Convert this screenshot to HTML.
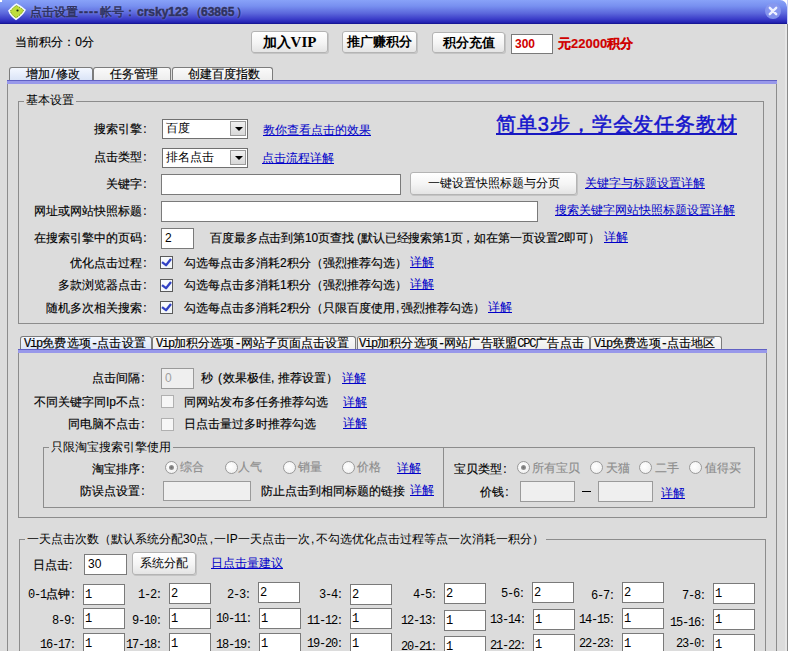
<!DOCTYPE html>
<html><head><meta charset="utf-8">
<style>
*{box-sizing:border-box}
html,body{margin:0;padding:0}
body{width:788px;height:651px;overflow:hidden;position:relative;background:#dcdcdc;font-family:"Liberation Sans",sans-serif;font-size:12px;color:#000}
.a{position:absolute;white-space:nowrap;line-height:12px;-webkit-text-stroke:0.15px currentColor}
.c{display:inline-block;width:6px;text-align:center}
.r{text-align:right}
.title{position:absolute;left:0;top:0;width:787px;height:24px;background:linear-gradient(#88a2f8 0%,#7890f0 25%,#5c68dc 55%,#3a3cc8 80%,#2424b4 93%,#10108a 100%);border-top-left-radius:3px;border-top-right-radius:7px}
.btn{position:absolute;border:1px solid #b4b4b4;border-radius:3px;background:linear-gradient(#ffffff,#f4f4f4 55%,#e4e4e4);box-shadow:1px 1px 0 #c4c4c4;text-align:center;white-space:nowrap}
.inp{position:absolute;background:#fff;border:1px solid #7a7a7a;white-space:nowrap;padding-left:3px}
.dis{background:#efefef;border-color:#9a9a9a;color:#a0a0a0}
.lnk{color:#0000c8;text-decoration:underline;-webkit-text-stroke:0 !important}
.frame{position:absolute;border:1px solid #8c8c8c}
.tab{position:absolute;border:1px solid #7c7c7c;border-bottom:none;border-radius:3px 3px 0 0;background:linear-gradient(#fafafa,#ececec)}
.tab.sel{background:linear-gradient(#f4f8ff,#d8e2f6)}
.bluel{position:absolute;height:4px;background:#9898ea;border-top:1px solid #6060c4}
.chk{position:absolute;width:13px;height:13px;background:linear-gradient(135deg,#fafcff,#f0f4f8);border:1px solid #5a5a5a}
.chk.off{background:#f6f6f6;border-color:#b0b0b0}
.rad{position:absolute;width:13px;height:13px;border-radius:50%;border:1px solid #9a9a9a;background:radial-gradient(circle at 40% 40%,#ffffff,#ececec)}
.rad.on::after{content:"";position:absolute;left:3px;top:3px;width:5px;height:5px;border-radius:50%;background:radial-gradient(#707070,#a8a8a8)}
.gray{color:#8c8c8c}
.lg{position:absolute;background:#dcdcdc;padding:0 2px;line-height:12px;white-space:nowrap}
.cmb{position:absolute;background:#fff;border:1px solid #707070;padding-left:3px;line-height:17px;white-space:nowrap}
.cmb i{position:absolute;right:1px;top:1px;width:16px;height:15px;background:linear-gradient(#f0f0f0,#d8d8d8);border:1px solid #9a9a9a}
.cmb i::after{content:"";position:absolute;left:4px;top:5px;border-left:4px solid transparent;border-right:4px solid transparent;border-top:4px solid #000}
.tt{top:6px;color:#2e3260;-webkit-text-stroke:0.5px #2e3260;text-shadow:0 0 2px #a0acf0}
.m{font-family:"Liberation Mono",monospace;font-size:12px;letter-spacing:-1.2px}
.gl{-webkit-text-stroke:0.2px #000}.gl .m{-webkit-text-stroke:0}
.gi{width:42px;height:21px;line-height:20px;font-family:"Liberation Mono",monospace;font-size:12px;padding-left:1px}
.mono{font-family:"Liberation Mono",monospace;font-size:11px}
</style></head><body>
<div style="position:absolute;left:0;top:0;width:788px;height:10px;background:#fff"></div>
<div class="title"></div>
<svg style="position:absolute;left:0;top:0" width="30" height="24" viewBox="0 0 30 24"><path d="M16.5 4.2 C19 5.5 22.5 7.5 25 10 C23 14 19.5 17 16 19.2 C12.5 17 10 14 9 10.8 C11.5 8 14 5.5 16.5 4.2 Z" fill="#bedc3c" stroke="#f4f8ff" stroke-width="1.6"/><path d="M16.5 5.6 C18.8 6.8 21.6 8.6 23.5 10.2 C21.8 13.4 19 15.8 16 17.6 C13 15.8 11 13.4 10.4 11 C12.4 8.8 14.4 6.8 16.5 5.6 Z" fill="none" stroke="#5a7a20" stroke-width="0.8" stroke-dasharray="1.2 1.6"/><circle cx="17.5" cy="10.5" r="1.1" fill="#1a2a08"/></svg>
<div class="a tt" style="left:30px">点击设置</div><div class="a tt" style="left:79px;letter-spacing:1px;font-weight:bold">----</div><div class="a tt" style="left:100px">帐号</div><div class="a tt" style="left:124px">：</div><div class="a tt" style="left:137px;font-weight:bold">crsky123</div><div class="a tt" style="left:190px">（</div><div class="a tt" style="left:201px;font-weight:bold">63865</div><div class="a tt" style="left:236px">）</div>
<svg style="position:absolute;left:764px;top:2px" width="18" height="18" viewBox="0 0 18 18"><circle cx="9" cy="9" r="8" fill="#8898ee" opacity="0.9"/><path d="M5.8 5.8 L12.2 12.2 M12.2 5.8 L5.8 12.2" stroke="#eef0ff" stroke-width="2.4" stroke-linecap="round"/></svg>
<div style="position:absolute;left:0;top:0;width:2px;height:2px;background:#fff"></div>

<!-- window right border -->
<div style="position:absolute;left:787px;top:0;width:1px;height:24px;background:#c8d0f8"></div>
<div style="position:absolute;left:785px;top:24px;width:2px;height:627px;background:#e6e6e6"></div>
<div style="position:absolute;left:787px;top:24px;width:1px;height:627px;background:#8a8a8a"></div>

<!-- top row -->
<div class="a" style="left:15px;top:36px">当前积分<span style="letter-spacing:-3px">：</span> 0分</div>
<div class="btn" style="left:251px;top:31px;width:77px;height:22px;font-weight:bold;font-size:14px;line-height:20px">加入<span style="font-family:'Liberation Serif',serif;font-size:15px">VIP</span></div>
<div class="btn" style="left:342px;top:31px;width:75px;height:22px;font-weight:bold;font-size:13px;line-height:20px">推广赚积分</div>
<div class="btn" style="left:432px;top:32px;width:73px;height:21px;font-weight:bold;font-size:13px;line-height:19px">积分充值</div>
<div class="inp" style="left:511px;top:34px;width:42px;height:20px;color:#d00000;font-weight:bold;font-size:12px;line-height:18px">300</div>
<div class="a" style="left:558px;top:37px;color:#d00000;font-weight:bold;font-size:13px;line-height:13px">元22000积分</div>

<!-- outer tabs -->
<div class="frame" style="left:7px;top:80px;width:770px;height:600px"></div>
<div class="tab sel" style="left:9px;top:67px;width:84px;height:14px"></div>
<div class="tab" style="left:93px;top:67px;width:78px;height:14px"></div>
<div class="tab" style="left:172px;top:67px;width:101px;height:14px"></div>
<div class="a" style="left:26px;top:68px">增加<span class="c">/</span>修改</div>
<div class="a" style="left:110px;top:68px">任务管理</div>
<div class="a" style="left:188px;top:68px">创建百度指数</div>
<div class="bluel" style="left:7px;top:80px;width:770px"></div>

<!-- group 基本设置 -->
<div class="frame" style="left:18px;top:101px;width:746px;height:223px"></div>
<div class="lg" style="left:24px;top:94px">基本设置</div>
<div class="a r" style="left:41px;top:123px;width:107px">搜索引擎<span class="c">:</span></div>
<div class="cmb" style="left:162px;top:119px;width:86px;height:20px">百度<i></i></div>
<div class="a lnk" style="left:263px;top:124px">教你查看点击的效果</div>
<div class="a" style="left:496px;top:114px;font-size:20px;line-height:20px;letter-spacing:0.9px;color:#1414cc;-webkit-text-stroke:0.5px #1414cc">简单3步，学会发任务教材</div><div style="position:absolute;left:496px;top:133px;width:241px;height:2px;background:#1818c0"></div>

<div class="a r" style="left:41px;top:151px;width:107px">点击类型<span class="c">:</span></div>
<div class="cmb" style="left:162px;top:148px;width:86px;height:20px">排名点击<i></i></div>
<div class="a lnk" style="left:262px;top:152px">点击流程详解</div>

<div class="a r" style="left:41px;top:178px;width:107px">关键字<span class="c">:</span></div>
<div class="inp" style="left:161px;top:174px;width:240px;height:21px"></div>
<div class="btn" style="left:410px;top:172px;width:167px;height:23px;line-height:21px">一键设置快照标题与分页</div>
<div class="a lnk" style="left:585px;top:177px">关键字与标题设置详解</div>

<div class="a r" style="left:21px;top:205px;width:127px">网址或网站快照标题<span class="c">:</span></div>
<div class="inp" style="left:161px;top:201px;width:377px;height:21px"></div>
<div class="a lnk" style="left:555px;top:204px">搜索关键字网站快照标题设置详解</div>

<div class="a r" style="left:21px;top:232px;width:127px">在搜索引擎中的页码<span class="c">:</span></div>
<div class="inp" style="left:161px;top:228px;width:33px;height:21px;line-height:19px">2</div>
<div class="a" style="left:210px;top:232px;letter-spacing:-0.12px">百度最多点击到第10页查找 (默认已经搜索第1页，如在第一页设置2即可）</div>
<div class="a lnk" style="left:604px;top:231px">详解</div>

<div class="a r" style="left:21px;top:257px;width:127px">优化点击过程<span class="c">:</span></div>
<div class="chk" style="left:160px;top:256px"><svg width="11" height="11" viewBox="0 0 11 11" style="position:absolute;left:0;top:0"><path d="M1 5.2 L5 8.2 L10 2" fill="none" stroke="#3242c4" stroke-width="2.3" stroke-linejoin="round"/></svg></div>
<div class="a" style="left:184px;top:257px">勾选每点击多消耗2积分（强烈推荐勾选）</div>
<div class="a lnk" style="left:410px;top:256px">详解</div>

<div class="a r" style="left:21px;top:279px;width:127px">多款浏览器点击<span class="c">:</span></div>
<div class="chk" style="left:160px;top:279px"><svg width="11" height="11" viewBox="0 0 11 11" style="position:absolute;left:0;top:0"><path d="M1 5.2 L5 8.2 L10 2" fill="none" stroke="#3242c4" stroke-width="2.3" stroke-linejoin="round"/></svg></div>
<div class="a" style="left:184px;top:279px">勾选每点击多消耗1积分（强烈推荐勾选）</div>
<div class="a lnk" style="left:410px;top:278px">详解</div>

<div class="a r" style="left:21px;top:302px;width:127px">随机多次相关搜索<span class="c">:</span></div>
<div class="chk" style="left:160px;top:301px"><svg width="11" height="11" viewBox="0 0 11 11" style="position:absolute;left:0;top:0"><path d="M1 5.2 L5 8.2 L10 2" fill="none" stroke="#3242c4" stroke-width="2.3" stroke-linejoin="round"/></svg></div>
<div class="a" style="left:184px;top:302px">勾选每点击多消耗2积分（只限百度使用<span class="c">,</span>强烈推荐勾选）</div>
<div class="a lnk" style="left:488px;top:301px">详解</div>

<!-- inner tabs -->
<div class="frame" style="left:18px;top:349px;width:749px;height:169px"></div>
<div class="tab sel" style="left:20px;top:336px;width:132px;height:14px"></div>
<div class="tab" style="left:152px;top:336px;width:204px;height:14px"></div>
<div class="tab" style="left:357px;top:336px;width:233px;height:14px"></div>
<div class="tab" style="left:590px;top:336px;width:132px;height:14px"></div>
<div class="a" style="left:24px;top:337px;letter-spacing:0.25px"><span class="m">Vip</span>免费选项<span class="m">-</span>点击设置</div>
<div class="a" style="left:156px;top:337px;letter-spacing:0.1px"><span class="m">Vip</span>加积分选项<span class="m">-</span>网站子页面点击设置</div>
<div class="a" style="left:359px;top:337px;letter-spacing:0.2px"><span class="m">Vip</span>加积分选项<span class="m">-</span>网站广告联盟<span class="m">CPC</span>广告点击</div>
<div class="a" style="left:594px;top:337px;letter-spacing:0.2px"><span class="m">Vip</span>免费选项<span class="m">-</span>点击地区</div>
<div class="bluel" style="left:18px;top:349px;width:749px"></div>

<div class="a r" style="left:19px;top:372px;width:127px">点击间隔<span class="c">:</span></div>
<div class="inp dis" style="left:161px;top:368px;width:33px;height:21px;line-height:19px">0</div>
<div class="a" style="left:201px;top:372px">秒</div><div class="a" style="left:218px;top:372px">(</div><div class="a" style="left:223px;top:372px">效果极佳,</div><div class="a" style="left:278px;top:372px">推荐设置）</div>
<div class="a lnk" style="left:342px;top:372px">详解</div>

<div class="a r" style="left:19px;top:396px;width:127px">不同关键字同Ip不点<span class="c">:</span></div>
<div class="chk off" style="left:161px;top:395px"></div>
<div class="a" style="left:184px;top:396px">同网站发布多任务推荐勾选</div>
<div class="a lnk" style="left:343px;top:396px">详解</div>

<div class="a r" style="left:19px;top:418px;width:127px">同电脑不点击<span class="c">:</span></div>
<div class="chk off" style="left:161px;top:418px"></div>
<div class="a" style="left:184px;top:418px">日点击量过多时推荐勾选</div>
<div class="a lnk" style="left:343px;top:417px">详解</div>

<!-- taobao group -->
<div class="frame" style="left:43px;top:447px;width:712px;height:61px"></div>
<div style="position:absolute;left:443px;top:447px;width:1px;height:60px;background:#8c8c8c"></div>
<div class="lg" style="left:49px;top:441px">只限淘宝搜索引擎使用</div>
<div class="a r" style="left:39px;top:463px;width:107px">淘宝排序<span class="c">:</span></div>
<div class="rad on" style="left:165px;top:461px"></div><div class="a gray" style="left:180px;top:461px">综合</div>
<div class="rad" style="left:225px;top:461px"></div><div class="a gray" style="left:238px;top:461px">人气</div>
<div class="rad" style="left:283px;top:461px"></div><div class="a gray" style="left:298px;top:461px">销量</div>
<div class="rad" style="left:342px;top:461px"></div><div class="a gray" style="left:357px;top:461px">价格</div>
<div class="a lnk" style="left:397px;top:462px">详解</div>
<div class="a r" style="left:39px;top:485px;width:107px">防误点设置<span class="c">:</span></div>
<div class="inp dis" style="left:163px;top:481px;width:88px;height:20px"></div>
<div class="a" style="left:261px;top:485px">防止点击到相同标题的链接</div>
<div class="a lnk" style="left:410px;top:484px">详解</div>

<div class="a" style="left:454px;top:463px">宝贝类型<span class="c">:</span></div>
<div class="rad on" style="left:517px;top:461px"></div><div class="a gray" style="left:532px;top:462px">所有宝贝</div>
<div class="rad" style="left:590px;top:461px"></div><div class="a gray" style="left:606px;top:462px">天猫</div>
<div class="rad" style="left:639px;top:461px"></div><div class="a gray" style="left:655px;top:462px">二手</div>
<div class="rad" style="left:689px;top:461px"></div><div class="a gray" style="left:705px;top:462px">值得买</div>
<div class="a" style="left:480px;top:486px">价钱<span class="c">:</span></div>
<div class="inp dis" style="left:520px;top:481px;width:55px;height:21px"></div>
<div style="position:absolute;left:582px;top:491px;width:9px;height:1px;background:#000"></div>
<div class="inp dis" style="left:598px;top:481px;width:55px;height:21px"></div>
<div class="a lnk" style="left:661px;top:487px">详解</div>

<!-- 一天点击次数 group -->
<div class="frame" style="left:19px;top:539px;width:747px;height:200px"></div>
<div class="lg" style="left:25px;top:533px">一天点击次数（默认系统分配30点<span class="c">,</span>一IP一天点击一次<span class="c">,</span>不勾选优化点击过程等点一次消耗一积分）</div>
<div class="a" style="left:33px;top:559px">日点击:</div>
<div class="inp" style="left:84px;top:554px;width:43px;height:21px;line-height:19px">30</div>
<div class="btn" style="left:132px;top:552px;width:64px;height:23px;line-height:21px">系统分配</div>
<div class="a lnk" style="left:211px;top:557px">日点击量建议</div>
<!-- GRID -->
<div class="a r gl" style="left:-4px;top:588px;width:80px"><span class="m">0-1</span>点钟<span class="c">:</span></div>
<div class="inp gi" style="left:83px;top:584px">1</div>
<div class="a r gl" style="left:82px;top:588px;width:80px"><span class="m">1-2</span><span class="c">:</span></div>
<div class="inp gi" style="left:169px;top:583px">2</div>
<div class="a r gl" style="left:171px;top:588px;width:80px"><span class="m">2-3</span><span class="c">:</span></div>
<div class="inp gi" style="left:258px;top:582px">2</div>
<div class="a r gl" style="left:263px;top:588px;width:80px"><span class="m">3-4</span><span class="c">:</span></div>
<div class="inp gi" style="left:350px;top:584px">2</div>
<div class="a r gl" style="left:357px;top:588px;width:80px"><span class="m">4-5</span><span class="c">:</span></div>
<div class="inp gi" style="left:444px;top:583px">2</div>
<div class="a r gl" style="left:445px;top:587px;width:80px"><span class="m">5-6</span><span class="c">:</span></div>
<div class="inp gi" style="left:532px;top:582px">2</div>
<div class="a r gl" style="left:535px;top:589px;width:80px"><span class="m">6-7</span><span class="c">:</span></div>
<div class="inp gi" style="left:622px;top:582px">2</div>
<div class="a r gl" style="left:626px;top:589px;width:80px"><span class="m">7-8</span><span class="c">:</span></div>
<div class="inp gi" style="left:713px;top:583px">1</div>
<div class="a r gl" style="left:-4px;top:614px;width:80px"><span class="m">8-9</span><span class="c">:</span></div>
<div class="inp gi" style="left:83px;top:608px">1</div>
<div class="a r gl" style="left:82px;top:614px;width:80px"><span class="m">9-10</span><span class="c">:</span></div>
<div class="inp gi" style="left:169px;top:608px">1</div>
<div class="a r gl" style="left:172px;top:612px;width:80px"><span class="m">10-11</span><span class="c">:</span></div>
<div class="inp gi" style="left:259px;top:608px">1</div>
<div class="a r gl" style="left:263px;top:614px;width:80px"><span class="m">11-12</span><span class="c">:</span></div>
<div class="inp gi" style="left:350px;top:608px">1</div>
<div class="a r gl" style="left:357px;top:614px;width:80px"><span class="m">12-13</span><span class="c">:</span></div>
<div class="inp gi" style="left:444px;top:610px">1</div>
<div class="a r gl" style="left:446px;top:613px;width:80px"><span class="m">13-14</span><span class="c">:</span></div>
<div class="inp gi" style="left:533px;top:609px">1</div>
<div class="a r gl" style="left:535px;top:613px;width:80px"><span class="m">14-15</span><span class="c">:</span></div>
<div class="inp gi" style="left:622px;top:608px">1</div>
<div class="a r gl" style="left:626px;top:616px;width:80px"><span class="m">15-16</span><span class="c">:</span></div>
<div class="inp gi" style="left:713px;top:609px">1</div>
<div class="a r gl" style="left:-4px;top:638px;width:80px"><span class="m">16-17</span><span class="c">:</span></div>
<div class="inp gi" style="left:83px;top:633px">1</div>
<div class="a r gl" style="left:82px;top:638px;width:80px"><span class="m">17-18</span><span class="c">:</span></div>
<div class="inp gi" style="left:169px;top:633px">1</div>
<div class="a r gl" style="left:172px;top:638px;width:80px"><span class="m">18-19</span><span class="c">:</span></div>
<div class="inp gi" style="left:259px;top:633px">1</div>
<div class="a r gl" style="left:263px;top:637px;width:80px"><span class="m">19-20</span><span class="c">:</span></div>
<div class="inp gi" style="left:350px;top:633px">1</div>
<div class="a r gl" style="left:357px;top:640px;width:80px"><span class="m">20-21</span><span class="c">:</span></div>
<div class="inp gi" style="left:444px;top:636px">1</div>
<div class="a r gl" style="left:446px;top:639px;width:80px"><span class="m">21-22</span><span class="c">:</span></div>
<div class="inp gi" style="left:533px;top:634px">1</div>
<div class="a r gl" style="left:535px;top:637px;width:80px"><span class="m">22-23</span><span class="c">:</span></div>
<div class="inp gi" style="left:622px;top:633px">1</div>
<div class="a r gl" style="left:626px;top:637px;width:80px"><span class="m">23-0</span><span class="c">:</span></div>
<div class="inp gi" style="left:713px;top:634px">1</div>
<!-- /GRID -->
</body></html>
